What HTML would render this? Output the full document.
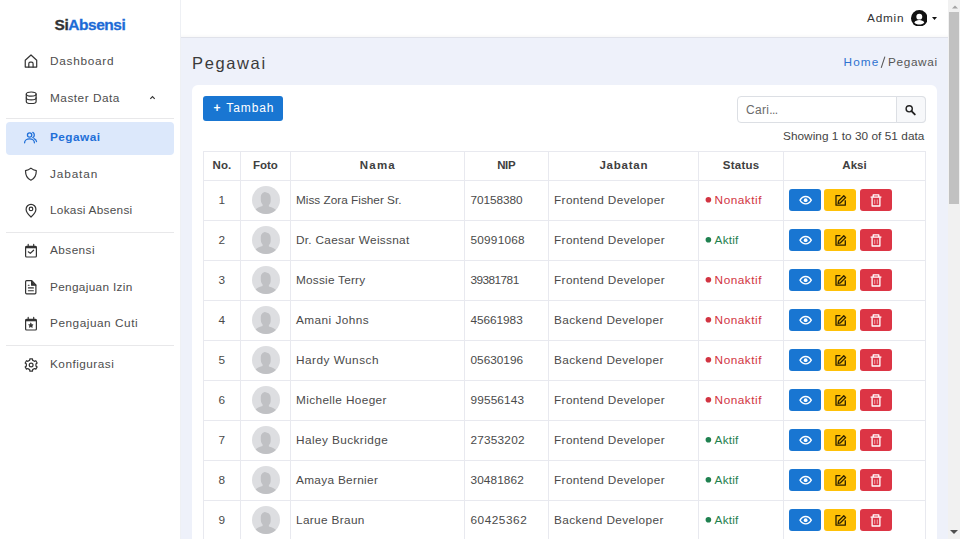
<!DOCTYPE html>
<html><head><meta charset="utf-8">
<style>
*{box-sizing:border-box;margin:0;padding:0}
html,body{width:960px;height:539px;overflow:hidden}
body{position:relative;background:#eef1fa;font-family:"Liberation Sans",sans-serif;color:#444}
.a{position:absolute;white-space:nowrap}
#sidebar{position:absolute;left:0;top:0;width:181px;height:539px;background:#fff;border-right:1px solid #eef0f4}
#topbar{position:absolute;left:181px;top:0;width:767px;height:38px;background:#fff;border-bottom:1px solid #e0e2ea;box-shadow:inset 0 -3px 3px -2px rgba(0,0,0,.035)}
.nav{position:absolute;left:50px;font-size:11.8px;color:#444;line-height:14px;white-space:nowrap}
.sep{position:absolute;left:6px;width:168px;height:1px;background:#e8e8ea}
#card{position:absolute;left:192px;top:85px;width:745px;height:470px;background:#fff;border-radius:6px}
.btn{position:absolute;border-radius:3px}
.th{position:absolute;font-weight:bold;font-size:11.5px;color:#404040;line-height:14px;white-space:nowrap}
.td{position:absolute;font-size:11.8px;color:#4a4a4a;line-height:14px;white-space:nowrap}
.hl{position:absolute;height:1px;background:#e8e9ef}
.vl{position:absolute;width:1px;background:#e8e9ef}
.av{position:absolute;left:252px;width:28px;height:28px;border-radius:50%;background:#dddee1;overflow:hidden}
.ab{position:absolute;width:32px;height:22px;border-radius:3px}
</style></head><body>
<div id="sidebar">
<div class="a" style="left:54.5px;top:17px;font-size:15.5px;font-weight:bold;line-height:16px;letter-spacing:-.45px;-webkit-text-stroke:.3px"><span style="color:#333">Si</span><span style="color:#1d6bd6">Absensi</span></div>
<svg class="a" style="left:20px;top:50px" width="22" height="22" viewBox="0 0 22 22" fill="none" stroke="#333" stroke-width="1.2" stroke-linejoin="round" stroke-linecap="round"><path d="M5.25 17.05V10.2L11 4.95l5.7 5.25v6.85z"/><path d="M8.8 17.05v-3.4a1.5 1.5 0 0 1 1.5-1.5h1.3a1.5 1.5 0 0 1 1.5 1.5v3.4"/></svg>
<div class="nav" style="top:54px;letter-spacing:0.725px;color:#4d4d4d;">Dashboard</div>
<svg class="a" style="left:20px;top:87px" width="22" height="22" viewBox="0 0 22 22" fill="none" stroke="#333" stroke-width="1.2" stroke-linejoin="round" stroke-linecap="round"><ellipse cx="11.2" cy="7.1" rx="4.9" ry="2.1"/><path d="M6.3 7.1v7.3c0 1.2 2.2 2.1 4.9 2.1s4.9-.9 4.9-2.1V7.1"/><path d="M6.3 10.8c0 1.2 2.2 2.1 4.9 2.1s4.9-.9 4.9-2.1"/></svg>
<div class="nav" style="top:90.5px;letter-spacing:0.51px;color:#4d4d4d;">Master Data</div>
<svg class="a" style="left:148.5px;top:95px" width="7" height="5" viewBox="0 0 7 5"><path d="M1.3 3.8 3.5 1.5 5.7 3.8" fill="none" stroke="#333" stroke-width="1.15"/></svg>
<div class="sep" style="top:118px"></div>
<div class="a" style="left:6px;top:121.5px;width:168px;height:33px;background:#dce8fb;border-radius:4px"></div>
<svg class="a" style="left:20px;top:127px" width="22" height="22" viewBox="0 0 22 22" fill="none" stroke="#1f6fd8" stroke-width="1.3" stroke-linejoin="round" stroke-linecap="round"><circle cx="9.6" cy="8" r="2.15"/><path d="M4.6 15.8c0-2.3 2.2-3.9 4.9-3.9s4.9 1.6 4.9 3.9"/><path d="M12.8 5.4c1 .4 1.5 1.5 1.5 2.6s-.5 2.2-1.5 2.6"/><path d="M14 11.6c1.5.6 2.4 1.6 2.5 2.9"/></svg>
<div class="nav" style="top:130px;letter-spacing:0.467px;color:#1f6fd8;font-weight:bold;">Pegawai</div>
<svg class="a" style="left:20px;top:163px" width="22" height="22" viewBox="0 0 22 22" fill="none" stroke="#333" stroke-width="1.2" stroke-linejoin="round" stroke-linecap="round"><path d="M10.9 5.1C9.3 6.4 7.6 7.2 5.5 7.7c0 5 2.3 8.2 5.4 9.5 3.1-1.3 5.4-4.5 5.4-9.5-2.1-.5-3.8-1.3-5.4-2.6z"/></svg>
<div class="nav" style="top:166.5px;letter-spacing:0.883px;color:#4d4d4d;">Jabatan</div>
<svg class="a" style="left:20px;top:199px" width="22" height="22" viewBox="0 0 22 22" fill="none" stroke="#333" stroke-width="1.2" stroke-linejoin="round" stroke-linecap="round"><path d="M11 18C8 15.3 6.1 12.7 6.1 10.2a4.9 4.9 0 0 1 9.8 0c0 2.5-1.9 5.1-4.9 7.8z"/><circle cx="11" cy="9.9" r="1.8"/></svg>
<div class="nav" style="top:203px;letter-spacing:0.269px;color:#4d4d4d;">Lokasi Absensi</div>
<div class="sep" style="top:231.5px"></div>
<svg class="a" style="left:20px;top:240px" width="22" height="22" viewBox="0 0 22 22" fill="none" stroke="#333" stroke-width="1.2" stroke-linejoin="round" stroke-linecap="round"><path d="M6.6 6.4h8.8a1 1 0 0 1 1 1V16a1 1 0 0 1-1 1H6.6a1 1 0 0 1-1-1V7.4a1 1 0 0 1 1-1z"/><path d="M5.6 7.3h10.8" stroke-width="2" stroke-linecap="butt"/><path d="M8.2 4.4v2M13.7 4.4v2"/><path d="M8.3 11.8l2 1.6 3.3-3.2"/></svg>
<div class="nav" style="top:243px;letter-spacing:0.433px;color:#4d4d4d;">Absensi</div>
<svg class="a" style="left:20px;top:277px" width="22" height="22" viewBox="0 0 22 22" fill="none" stroke="#333" stroke-width="1.2" stroke-linejoin="round" stroke-linecap="round"><path d="M6.6 3.7h5.2l4.1 4.3v7.8a1 1 0 0 1-1 1H6.6a1 1 0 0 1-1-1V4.7a1 1 0 0 1 1-1z"/><path d="M11.6 4v4.2h4.1" fill="#333"/><path d="M8.3 8.2h.8M8.4 10.9h5M8.4 13.7h5" stroke-width="1.1"/></svg>
<div class="nav" style="top:279.5px;letter-spacing:0.323px;color:#4d4d4d;">Pengajuan Izin</div>
<svg class="a" style="left:20px;top:313px" width="22" height="22" viewBox="0 0 22 22" fill="none" stroke="#333" stroke-width="1.2" stroke-linejoin="round" stroke-linecap="round"><path d="M6.6 6.4h8.8a1 1 0 0 1 1 1V16a1 1 0 0 1-1 1H6.6a1 1 0 0 1-1-1V7.4a1 1 0 0 1 1-1z"/><path d="M5.6 7.3h10.8" stroke-width="2" stroke-linecap="butt"/><path d="M8.2 4.4v2M13.7 4.4v2"/><path d="M10.85 10.1l.75 1.45 1.55.2-1.15 1.1.3 1.55-1.45-.75-1.45.75.3-1.55-1.15-1.1 1.55-.2z" fill="#333" stroke-width=".6"/></svg>
<div class="nav" style="top:316px;letter-spacing:0.531px;color:#4d4d4d;">Pengajuan Cuti</div>
<div class="sep" style="top:344.5px"></div>
<svg class="a" style="left:20px;top:354px" width="22" height="22" viewBox="0 0 22 22" fill="none" stroke="#333" stroke-width="1.2" stroke-linejoin="round" stroke-linecap="round"><path d="M8.73 6.75 L9.65 6.34 L9.84 4.79 L12.46 4.79 L12.65 6.34 L13.58 6.75 L14.40 7.35 L15.83 6.73 L17.14 9.00 L15.89 9.94 L16.00 10.95 L15.89 11.96 L17.14 12.90 L15.83 15.17 L14.40 14.55 L13.57 15.15 L12.65 15.56 L12.46 17.11 L9.84 17.11 L9.65 15.56 L8.72 15.15 L7.90 14.55 L6.47 15.17 L5.16 12.90 L6.41 11.96 L6.30 10.95 L6.41 9.94 L5.16 9.00 L6.47 6.73 L7.90 7.35z"/><circle cx="11.15" cy="10.95" r="1.9"/></svg>
<div class="nav" style="top:357px;letter-spacing:0.48px;color:#4d4d4d;">Konfigurasi</div>
</div>
<div id="topbar"></div>
<div class="a" style="left:867px;top:10.8px;font-size:11.8px;color:#333;letter-spacing:0.775px;line-height:14px">Admin</div>
<svg class="a" style="left:910.5px;top:9.7px" width="16.6" height="16.6" viewBox="0 0 24 24"><circle cx="12" cy="12" r="12" fill="#111"/><circle cx="12" cy="9.6" r="4.3" fill="#fff"/><path d="M4.8 18c1.4-2.1 4-3.4 7.2-3.4s5.8 1.3 7.2 3.4c-1.7 1.9-4.2 3-7.2 3s-5.5-1.1-7.2-3z" fill="#fff"/></svg>
<svg class="a" style="left:931.5px;top:16.8px" width="5" height="3" viewBox="0 0 5 3"><path d="M0 0h5L2.5 3z" fill="#111"/></svg>
<div class="a" style="left:843.5px;top:55px;font-size:11.8px;line-height:14px;color:#2f72d0;letter-spacing:1.133px">Home</div>
<svg class="a" style="left:878px;top:54px" width="10" height="16" viewBox="0 0 10 16"><path d="M6.9 2.6 3.2 13.9" stroke="#555" stroke-width="1.05"/></svg>
<div class="a" style="left:888px;top:55px;font-size:11.8px;line-height:14px;color:#555;letter-spacing:0.629px">Pegawai</div>
<div class="a" style="left:192px;top:53.7px;font-size:16.5px;color:#3a3a3a;letter-spacing:1.63px;line-height:18px">Pegawai</div>

<div id="card"></div>
<div class="btn" style="left:203px;top:96px;width:80px;height:24.6px;background:#1976d2"></div>
<div class="a" style="left:213.5px;top:101px;font-size:12px;color:#fff;letter-spacing:1px;line-height:14px"><b style="letter-spacing:1.8px">+</b><span style="letter-spacing:.9px"> Tambah</span></div>
<div class="a" style="left:736.5px;top:96px;width:189px;height:26.5px;border:1px solid #dcdfe4;border-radius:4px;background:#fff"></div>
<div class="a" style="left:896px;top:96px;width:29.5px;height:26.5px;border:1px solid #dcdfe4;border-radius:0 4px 4px 0;background:#f7f8fa"></div>
<div class="a" style="left:746px;top:102.5px;font-size:12px;color:#6b6b6b;letter-spacing:.3px;line-height:14px">Cari<span style="letter-spacing:-.6px">...</span></div>
<svg class="a" style="left:900px;top:100px" width="20" height="20" viewBox="0 0 20 20"><circle cx="9.2" cy="8.8" r="3.1" fill="none" stroke="#222" stroke-width="1.4"/><path d="M11.5 11.1l3.3 3.3" stroke="#222" stroke-width="1.9" stroke-linecap="round"/></svg>
<div class="a" style="left:783px;top:129px;font-size:11.8px;color:#444;letter-spacing:.04px;line-height:14px">Showing 1 to 30 of 51 data</div>

<div class="vl" style="left:202.8px;top:151px;height:400px"></div>
<div class="vl" style="left:239.9px;top:151px;height:400px"></div>
<div class="vl" style="left:289.8px;top:151px;height:400px"></div>
<div class="vl" style="left:463.8px;top:151px;height:400px"></div>
<div class="vl" style="left:548.0px;top:151px;height:400px"></div>
<div class="vl" style="left:697.9px;top:151px;height:400px"></div>
<div class="vl" style="left:783.0px;top:151px;height:400px"></div>
<div class="vl" style="left:925.0px;top:151px;height:400px"></div>
<div class="hl" style="left:203px;top:151px;width:723px"></div>
<div class="hl" style="left:203px;top:179.5px;width:723px"></div>
<div class="hl" style="left:203px;top:219.5px;width:723px"></div>
<div class="hl" style="left:203px;top:259.5px;width:723px"></div>
<div class="hl" style="left:203px;top:299.5px;width:723px"></div>
<div class="hl" style="left:203px;top:339.5px;width:723px"></div>
<div class="hl" style="left:203px;top:379.5px;width:723px"></div>
<div class="hl" style="left:203px;top:419.5px;width:723px"></div>
<div class="hl" style="left:203px;top:459.5px;width:723px"></div>
<div class="hl" style="left:203px;top:499.5px;width:723px"></div>
<div class="th" style="left:203.3px;width:37.099999999999994px;top:158px;text-align:center;letter-spacing:0px;text-indent:0px">No.</div>
<div class="th" style="left:240.4px;width:49.900000000000006px;top:158px;text-align:center;letter-spacing:0px;text-indent:0px">Foto</div>
<div class="th" style="left:290.3px;width:174.0px;top:158px;text-align:center;letter-spacing:1.2px;text-indent:1.2px">Nama</div>
<div class="th" style="left:464.3px;width:84.19999999999999px;top:158px;text-align:center;letter-spacing:-0.4px;text-indent:-0.4px">NIP</div>
<div class="th" style="left:548.5px;width:149.89999999999998px;top:158px;text-align:center;letter-spacing:0.75px;text-indent:0.75px">Jabatan</div>
<div class="th" style="left:698.4px;width:85.10000000000002px;top:158px;text-align:center;letter-spacing:0.25px;text-indent:0.25px">Status</div>
<div class="th" style="left:783.5px;width:142.0px;top:158px;text-align:center;letter-spacing:0px;text-indent:0px">Aksi</div>
<div class="td" style="left:203.3px;width:37px;top:192.5px;text-align:center">1</div>
<div class="av" style="top:186px"><svg width="28" height="28" viewBox="0 0 28 28" style="display:block"><path d="M13.6 6.6c3 0 5.1 2.1 5.1 5.3v2.8c0 1.8-.7 3.3-1.8 4.3v1.5c3.5.7 6.4 2.3 8 4.6V28H2.6v-3.5c1.6-2.3 4.5-3.9 8-4.6v-1.5c-1.1-1-1.8-2.5-1.8-4.3v-2.8c0-3.2 2.1-5.3 4.8-5.3z" fill="#c0c1c4"/></svg></div>
<div class="td" style="left:296px;top:192.5px;letter-spacing:0.0px">Miss Zora Fisher Sr.</div>
<div class="td" style="left:470.5px;top:192.5px;letter-spacing:-0.071px">70158380</div>
<div class="td" style="left:554px;top:192.5px;letter-spacing:0.371px">Frontend Developer</div>
<svg class="a" style="left:703px;top:195px" width="10" height="10" viewBox="0 0 10 10"><circle cx="5.4" cy="4.8" r="2.8" fill="#d23442"/></svg>
<div class="td" style="left:714.6px;top:192.5px;color:#d23442;letter-spacing:0.514px">Nonaktif</div>
<div class="ab" style="left:789px;top:188.8px;background:#1976d2"><svg class="a" style="left:0;top:0" width="32" height="22" viewBox="0 0 32 22" fill="none" stroke="#fff" stroke-width="1.35"><path d="M11 11.2C12.5 8.6 14.4 7.5 16.65 7.5s4.15 1.1 5.65 3.7c-1.5 2.6-3.4 3.7-5.65 3.7S12.5 13.8 11 11.2z"/><circle cx="16.65" cy="11.2" r="1.9" fill="#fff" stroke="none"/></svg></div>
<div class="ab" style="left:824.4px;top:188.8px;background:#ffc107"><svg class="a" style="left:0;top:0" width="32" height="22" viewBox="0 0 32 22" fill="none" stroke="#2b2000" stroke-width="1.3" stroke-linejoin="round"><path d="M16.4 6.6H12v9.6h9.3V11.2"/><path d="M14.1 14.3l.5-2.3 5.2-5.2 1.8 1.8-5.2 5.2z"/></svg></div>
<div class="ab" style="left:860px;top:188.8px;background:#dc3545"><svg class="a" style="left:0;top:0" width="32" height="22" viewBox="0 0 32 22" fill="none" stroke="#fff" stroke-width="1.3" stroke-linejoin="round"><path d="M10.6 8.1h10.8"/><path d="M13.2 8V5.9h5.6V8"/><path d="M12.1 8.4v8.6h7.8V8.4"/><path d="M14.7 10.5v4.4M17.3 10.5v4.4" stroke-width=".8" stroke="#f3c2c7"/></svg></div>
<div class="td" style="left:203.3px;width:37px;top:232.5px;text-align:center">2</div>
<div class="av" style="top:226px"><svg width="28" height="28" viewBox="0 0 28 28" style="display:block"><path d="M13.6 6.6c3 0 5.1 2.1 5.1 5.3v2.8c0 1.8-.7 3.3-1.8 4.3v1.5c3.5.7 6.4 2.3 8 4.6V28H2.6v-3.5c1.6-2.3 4.5-3.9 8-4.6v-1.5c-1.1-1-1.8-2.5-1.8-4.3v-2.8c0-3.2 2.1-5.3 4.8-5.3z" fill="#c0c1c4"/></svg></div>
<div class="td" style="left:296px;top:232.5px;letter-spacing:0.289px">Dr. Caesar Weissnat</div>
<div class="td" style="left:470.5px;top:232.5px;letter-spacing:0.229px">50991068</div>
<div class="td" style="left:554px;top:232.5px;letter-spacing:0.371px">Frontend Developer</div>
<svg class="a" style="left:703px;top:235px" width="10" height="10" viewBox="0 0 10 10"><circle cx="5.4" cy="4.8" r="2.8" fill="#1f8150"/></svg>
<div class="td" style="left:714.6px;top:232.5px;color:#1f8150;letter-spacing:0.2px">Aktif</div>
<div class="ab" style="left:789px;top:228.8px;background:#1976d2"><svg class="a" style="left:0;top:0" width="32" height="22" viewBox="0 0 32 22" fill="none" stroke="#fff" stroke-width="1.35"><path d="M11 11.2C12.5 8.6 14.4 7.5 16.65 7.5s4.15 1.1 5.65 3.7c-1.5 2.6-3.4 3.7-5.65 3.7S12.5 13.8 11 11.2z"/><circle cx="16.65" cy="11.2" r="1.9" fill="#fff" stroke="none"/></svg></div>
<div class="ab" style="left:824.4px;top:228.8px;background:#ffc107"><svg class="a" style="left:0;top:0" width="32" height="22" viewBox="0 0 32 22" fill="none" stroke="#2b2000" stroke-width="1.3" stroke-linejoin="round"><path d="M16.4 6.6H12v9.6h9.3V11.2"/><path d="M14.1 14.3l.5-2.3 5.2-5.2 1.8 1.8-5.2 5.2z"/></svg></div>
<div class="ab" style="left:860px;top:228.8px;background:#dc3545"><svg class="a" style="left:0;top:0" width="32" height="22" viewBox="0 0 32 22" fill="none" stroke="#fff" stroke-width="1.3" stroke-linejoin="round"><path d="M10.6 8.1h10.8"/><path d="M13.2 8V5.9h5.6V8"/><path d="M12.1 8.4v8.6h7.8V8.4"/><path d="M14.7 10.5v4.4M17.3 10.5v4.4" stroke-width=".8" stroke="#f3c2c7"/></svg></div>
<div class="td" style="left:203.3px;width:37px;top:272.5px;text-align:center">3</div>
<div class="av" style="top:266px"><svg width="28" height="28" viewBox="0 0 28 28" style="display:block"><path d="M13.6 6.6c3 0 5.1 2.1 5.1 5.3v2.8c0 1.8-.7 3.3-1.8 4.3v1.5c3.5.7 6.4 2.3 8 4.6V28H2.6v-3.5c1.6-2.3 4.5-3.9 8-4.6v-1.5c-1.1-1-1.8-2.5-1.8-4.3v-2.8c0-3.2 2.1-5.3 4.8-5.3z" fill="#c0c1c4"/></svg></div>
<div class="td" style="left:296px;top:272.5px;letter-spacing:0.227px">Mossie Terry</div>
<div class="td" style="left:470.5px;top:272.5px;letter-spacing:-0.543px">39381781</div>
<div class="td" style="left:554px;top:272.5px;letter-spacing:0.371px">Frontend Developer</div>
<svg class="a" style="left:703px;top:275px" width="10" height="10" viewBox="0 0 10 10"><circle cx="5.4" cy="4.8" r="2.8" fill="#d23442"/></svg>
<div class="td" style="left:714.6px;top:272.5px;color:#d23442;letter-spacing:0.514px">Nonaktif</div>
<div class="ab" style="left:789px;top:268.8px;background:#1976d2"><svg class="a" style="left:0;top:0" width="32" height="22" viewBox="0 0 32 22" fill="none" stroke="#fff" stroke-width="1.35"><path d="M11 11.2C12.5 8.6 14.4 7.5 16.65 7.5s4.15 1.1 5.65 3.7c-1.5 2.6-3.4 3.7-5.65 3.7S12.5 13.8 11 11.2z"/><circle cx="16.65" cy="11.2" r="1.9" fill="#fff" stroke="none"/></svg></div>
<div class="ab" style="left:824.4px;top:268.8px;background:#ffc107"><svg class="a" style="left:0;top:0" width="32" height="22" viewBox="0 0 32 22" fill="none" stroke="#2b2000" stroke-width="1.3" stroke-linejoin="round"><path d="M16.4 6.6H12v9.6h9.3V11.2"/><path d="M14.1 14.3l.5-2.3 5.2-5.2 1.8 1.8-5.2 5.2z"/></svg></div>
<div class="ab" style="left:860px;top:268.8px;background:#dc3545"><svg class="a" style="left:0;top:0" width="32" height="22" viewBox="0 0 32 22" fill="none" stroke="#fff" stroke-width="1.3" stroke-linejoin="round"><path d="M10.6 8.1h10.8"/><path d="M13.2 8V5.9h5.6V8"/><path d="M12.1 8.4v8.6h7.8V8.4"/><path d="M14.7 10.5v4.4M17.3 10.5v4.4" stroke-width=".8" stroke="#f3c2c7"/></svg></div>
<div class="td" style="left:203.3px;width:37px;top:312.5px;text-align:center">4</div>
<div class="av" style="top:306px"><svg width="28" height="28" viewBox="0 0 28 28" style="display:block"><path d="M13.6 6.6c3 0 5.1 2.1 5.1 5.3v2.8c0 1.8-.7 3.3-1.8 4.3v1.5c3.5.7 6.4 2.3 8 4.6V28H2.6v-3.5c1.6-2.3 4.5-3.9 8-4.6v-1.5c-1.1-1-1.8-2.5-1.8-4.3v-2.8c0-3.2 2.1-5.3 4.8-5.3z" fill="#c0c1c4"/></svg></div>
<div class="td" style="left:296px;top:312.5px;letter-spacing:0.45px">Amani Johns</div>
<div class="td" style="left:470.5px;top:312.5px;letter-spacing:-0.043px">45661983</div>
<div class="td" style="left:554px;top:312.5px;letter-spacing:0.4px">Backend Developer</div>
<svg class="a" style="left:703px;top:315px" width="10" height="10" viewBox="0 0 10 10"><circle cx="5.4" cy="4.8" r="2.8" fill="#d23442"/></svg>
<div class="td" style="left:714.6px;top:312.5px;color:#d23442;letter-spacing:0.514px">Nonaktif</div>
<div class="ab" style="left:789px;top:308.8px;background:#1976d2"><svg class="a" style="left:0;top:0" width="32" height="22" viewBox="0 0 32 22" fill="none" stroke="#fff" stroke-width="1.35"><path d="M11 11.2C12.5 8.6 14.4 7.5 16.65 7.5s4.15 1.1 5.65 3.7c-1.5 2.6-3.4 3.7-5.65 3.7S12.5 13.8 11 11.2z"/><circle cx="16.65" cy="11.2" r="1.9" fill="#fff" stroke="none"/></svg></div>
<div class="ab" style="left:824.4px;top:308.8px;background:#ffc107"><svg class="a" style="left:0;top:0" width="32" height="22" viewBox="0 0 32 22" fill="none" stroke="#2b2000" stroke-width="1.3" stroke-linejoin="round"><path d="M16.4 6.6H12v9.6h9.3V11.2"/><path d="M14.1 14.3l.5-2.3 5.2-5.2 1.8 1.8-5.2 5.2z"/></svg></div>
<div class="ab" style="left:860px;top:308.8px;background:#dc3545"><svg class="a" style="left:0;top:0" width="32" height="22" viewBox="0 0 32 22" fill="none" stroke="#fff" stroke-width="1.3" stroke-linejoin="round"><path d="M10.6 8.1h10.8"/><path d="M13.2 8V5.9h5.6V8"/><path d="M12.1 8.4v8.6h7.8V8.4"/><path d="M14.7 10.5v4.4M17.3 10.5v4.4" stroke-width=".8" stroke="#f3c2c7"/></svg></div>
<div class="td" style="left:203.3px;width:37px;top:352.5px;text-align:center">5</div>
<div class="av" style="top:346px"><svg width="28" height="28" viewBox="0 0 28 28" style="display:block"><path d="M13.6 6.6c3 0 5.1 2.1 5.1 5.3v2.8c0 1.8-.7 3.3-1.8 4.3v1.5c3.5.7 6.4 2.3 8 4.6V28H2.6v-3.5c1.6-2.3 4.5-3.9 8-4.6v-1.5c-1.1-1-1.8-2.5-1.8-4.3v-2.8c0-3.2 2.1-5.3 4.8-5.3z" fill="#c0c1c4"/></svg></div>
<div class="td" style="left:296px;top:352.5px;letter-spacing:0.482px">Hardy Wunsch</div>
<div class="td" style="left:470.5px;top:352.5px;letter-spacing:0.014px">05630196</div>
<div class="td" style="left:554px;top:352.5px;letter-spacing:0.4px">Backend Developer</div>
<svg class="a" style="left:703px;top:355px" width="10" height="10" viewBox="0 0 10 10"><circle cx="5.4" cy="4.8" r="2.8" fill="#d23442"/></svg>
<div class="td" style="left:714.6px;top:352.5px;color:#d23442;letter-spacing:0.514px">Nonaktif</div>
<div class="ab" style="left:789px;top:348.8px;background:#1976d2"><svg class="a" style="left:0;top:0" width="32" height="22" viewBox="0 0 32 22" fill="none" stroke="#fff" stroke-width="1.35"><path d="M11 11.2C12.5 8.6 14.4 7.5 16.65 7.5s4.15 1.1 5.65 3.7c-1.5 2.6-3.4 3.7-5.65 3.7S12.5 13.8 11 11.2z"/><circle cx="16.65" cy="11.2" r="1.9" fill="#fff" stroke="none"/></svg></div>
<div class="ab" style="left:824.4px;top:348.8px;background:#ffc107"><svg class="a" style="left:0;top:0" width="32" height="22" viewBox="0 0 32 22" fill="none" stroke="#2b2000" stroke-width="1.3" stroke-linejoin="round"><path d="M16.4 6.6H12v9.6h9.3V11.2"/><path d="M14.1 14.3l.5-2.3 5.2-5.2 1.8 1.8-5.2 5.2z"/></svg></div>
<div class="ab" style="left:860px;top:348.8px;background:#dc3545"><svg class="a" style="left:0;top:0" width="32" height="22" viewBox="0 0 32 22" fill="none" stroke="#fff" stroke-width="1.3" stroke-linejoin="round"><path d="M10.6 8.1h10.8"/><path d="M13.2 8V5.9h5.6V8"/><path d="M12.1 8.4v8.6h7.8V8.4"/><path d="M14.7 10.5v4.4M17.3 10.5v4.4" stroke-width=".8" stroke="#f3c2c7"/></svg></div>
<div class="td" style="left:203.3px;width:37px;top:392.5px;text-align:center">6</div>
<div class="av" style="top:386px"><svg width="28" height="28" viewBox="0 0 28 28" style="display:block"><path d="M13.6 6.6c3 0 5.1 2.1 5.1 5.3v2.8c0 1.8-.7 3.3-1.8 4.3v1.5c3.5.7 6.4 2.3 8 4.6V28H2.6v-3.5c1.6-2.3 4.5-3.9 8-4.6v-1.5c-1.1-1-1.8-2.5-1.8-4.3v-2.8c0-3.2 2.1-5.3 4.8-5.3z" fill="#c0c1c4"/></svg></div>
<div class="td" style="left:296px;top:392.5px;letter-spacing:0.371px">Michelle Hoeger</div>
<div class="td" style="left:470.5px;top:392.5px;letter-spacing:0.157px">99556143</div>
<div class="td" style="left:554px;top:392.5px;letter-spacing:0.371px">Frontend Developer</div>
<svg class="a" style="left:703px;top:395px" width="10" height="10" viewBox="0 0 10 10"><circle cx="5.4" cy="4.8" r="2.8" fill="#d23442"/></svg>
<div class="td" style="left:714.6px;top:392.5px;color:#d23442;letter-spacing:0.514px">Nonaktif</div>
<div class="ab" style="left:789px;top:388.8px;background:#1976d2"><svg class="a" style="left:0;top:0" width="32" height="22" viewBox="0 0 32 22" fill="none" stroke="#fff" stroke-width="1.35"><path d="M11 11.2C12.5 8.6 14.4 7.5 16.65 7.5s4.15 1.1 5.65 3.7c-1.5 2.6-3.4 3.7-5.65 3.7S12.5 13.8 11 11.2z"/><circle cx="16.65" cy="11.2" r="1.9" fill="#fff" stroke="none"/></svg></div>
<div class="ab" style="left:824.4px;top:388.8px;background:#ffc107"><svg class="a" style="left:0;top:0" width="32" height="22" viewBox="0 0 32 22" fill="none" stroke="#2b2000" stroke-width="1.3" stroke-linejoin="round"><path d="M16.4 6.6H12v9.6h9.3V11.2"/><path d="M14.1 14.3l.5-2.3 5.2-5.2 1.8 1.8-5.2 5.2z"/></svg></div>
<div class="ab" style="left:860px;top:388.8px;background:#dc3545"><svg class="a" style="left:0;top:0" width="32" height="22" viewBox="0 0 32 22" fill="none" stroke="#fff" stroke-width="1.3" stroke-linejoin="round"><path d="M10.6 8.1h10.8"/><path d="M13.2 8V5.9h5.6V8"/><path d="M12.1 8.4v8.6h7.8V8.4"/><path d="M14.7 10.5v4.4M17.3 10.5v4.4" stroke-width=".8" stroke="#f3c2c7"/></svg></div>
<div class="td" style="left:203.3px;width:37px;top:432.5px;text-align:center">7</div>
<div class="av" style="top:426px"><svg width="28" height="28" viewBox="0 0 28 28" style="display:block"><path d="M13.6 6.6c3 0 5.1 2.1 5.1 5.3v2.8c0 1.8-.7 3.3-1.8 4.3v1.5c3.5.7 6.4 2.3 8 4.6V28H2.6v-3.5c1.6-2.3 4.5-3.9 8-4.6v-1.5c-1.1-1-1.8-2.5-1.8-4.3v-2.8c0-3.2 2.1-5.3 4.8-5.3z" fill="#c0c1c4"/></svg></div>
<div class="td" style="left:296px;top:432.5px;letter-spacing:0.414px">Haley Buckridge</div>
<div class="td" style="left:470.5px;top:432.5px;letter-spacing:0.214px">27353202</div>
<div class="td" style="left:554px;top:432.5px;letter-spacing:0.371px">Frontend Developer</div>
<svg class="a" style="left:703px;top:435px" width="10" height="10" viewBox="0 0 10 10"><circle cx="5.4" cy="4.8" r="2.8" fill="#1f8150"/></svg>
<div class="td" style="left:714.6px;top:432.5px;color:#1f8150;letter-spacing:0.2px">Aktif</div>
<div class="ab" style="left:789px;top:428.8px;background:#1976d2"><svg class="a" style="left:0;top:0" width="32" height="22" viewBox="0 0 32 22" fill="none" stroke="#fff" stroke-width="1.35"><path d="M11 11.2C12.5 8.6 14.4 7.5 16.65 7.5s4.15 1.1 5.65 3.7c-1.5 2.6-3.4 3.7-5.65 3.7S12.5 13.8 11 11.2z"/><circle cx="16.65" cy="11.2" r="1.9" fill="#fff" stroke="none"/></svg></div>
<div class="ab" style="left:824.4px;top:428.8px;background:#ffc107"><svg class="a" style="left:0;top:0" width="32" height="22" viewBox="0 0 32 22" fill="none" stroke="#2b2000" stroke-width="1.3" stroke-linejoin="round"><path d="M16.4 6.6H12v9.6h9.3V11.2"/><path d="M14.1 14.3l.5-2.3 5.2-5.2 1.8 1.8-5.2 5.2z"/></svg></div>
<div class="ab" style="left:860px;top:428.8px;background:#dc3545"><svg class="a" style="left:0;top:0" width="32" height="22" viewBox="0 0 32 22" fill="none" stroke="#fff" stroke-width="1.3" stroke-linejoin="round"><path d="M10.6 8.1h10.8"/><path d="M13.2 8V5.9h5.6V8"/><path d="M12.1 8.4v8.6h7.8V8.4"/><path d="M14.7 10.5v4.4M17.3 10.5v4.4" stroke-width=".8" stroke="#f3c2c7"/></svg></div>
<div class="td" style="left:203.3px;width:37px;top:472.5px;text-align:center">8</div>
<div class="av" style="top:466px"><svg width="28" height="28" viewBox="0 0 28 28" style="display:block"><path d="M13.6 6.6c3 0 5.1 2.1 5.1 5.3v2.8c0 1.8-.7 3.3-1.8 4.3v1.5c3.5.7 6.4 2.3 8 4.6V28H2.6v-3.5c1.6-2.3 4.5-3.9 8-4.6v-1.5c-1.1-1-1.8-2.5-1.8-4.3v-2.8c0-3.2 2.1-5.3 4.8-5.3z" fill="#c0c1c4"/></svg></div>
<div class="td" style="left:296px;top:472.5px;letter-spacing:0.317px">Amaya Bernier</div>
<div class="td" style="left:470.5px;top:472.5px;letter-spacing:0.114px">30481862</div>
<div class="td" style="left:554px;top:472.5px;letter-spacing:0.371px">Frontend Developer</div>
<svg class="a" style="left:703px;top:475px" width="10" height="10" viewBox="0 0 10 10"><circle cx="5.4" cy="4.8" r="2.8" fill="#1f8150"/></svg>
<div class="td" style="left:714.6px;top:472.5px;color:#1f8150;letter-spacing:0.2px">Aktif</div>
<div class="ab" style="left:789px;top:468.8px;background:#1976d2"><svg class="a" style="left:0;top:0" width="32" height="22" viewBox="0 0 32 22" fill="none" stroke="#fff" stroke-width="1.35"><path d="M11 11.2C12.5 8.6 14.4 7.5 16.65 7.5s4.15 1.1 5.65 3.7c-1.5 2.6-3.4 3.7-5.65 3.7S12.5 13.8 11 11.2z"/><circle cx="16.65" cy="11.2" r="1.9" fill="#fff" stroke="none"/></svg></div>
<div class="ab" style="left:824.4px;top:468.8px;background:#ffc107"><svg class="a" style="left:0;top:0" width="32" height="22" viewBox="0 0 32 22" fill="none" stroke="#2b2000" stroke-width="1.3" stroke-linejoin="round"><path d="M16.4 6.6H12v9.6h9.3V11.2"/><path d="M14.1 14.3l.5-2.3 5.2-5.2 1.8 1.8-5.2 5.2z"/></svg></div>
<div class="ab" style="left:860px;top:468.8px;background:#dc3545"><svg class="a" style="left:0;top:0" width="32" height="22" viewBox="0 0 32 22" fill="none" stroke="#fff" stroke-width="1.3" stroke-linejoin="round"><path d="M10.6 8.1h10.8"/><path d="M13.2 8V5.9h5.6V8"/><path d="M12.1 8.4v8.6h7.8V8.4"/><path d="M14.7 10.5v4.4M17.3 10.5v4.4" stroke-width=".8" stroke="#f3c2c7"/></svg></div>
<div class="td" style="left:203.3px;width:37px;top:512.5px;text-align:center">9</div>
<div class="av" style="top:506px"><svg width="28" height="28" viewBox="0 0 28 28" style="display:block"><path d="M13.6 6.6c3 0 5.1 2.1 5.1 5.3v2.8c0 1.8-.7 3.3-1.8 4.3v1.5c3.5.7 6.4 2.3 8 4.6V28H2.6v-3.5c1.6-2.3 4.5-3.9 8-4.6v-1.5c-1.1-1-1.8-2.5-1.8-4.3v-2.8c0-3.2 2.1-5.3 4.8-5.3z" fill="#c0c1c4"/></svg></div>
<div class="td" style="left:296px;top:512.5px;letter-spacing:0.35px">Larue Braun</div>
<div class="td" style="left:470.5px;top:512.5px;letter-spacing:0.529px">60425362</div>
<div class="td" style="left:554px;top:512.5px;letter-spacing:0.4px">Backend Developer</div>
<svg class="a" style="left:703px;top:515px" width="10" height="10" viewBox="0 0 10 10"><circle cx="5.4" cy="4.8" r="2.8" fill="#1f8150"/></svg>
<div class="td" style="left:714.6px;top:512.5px;color:#1f8150;letter-spacing:0.2px">Aktif</div>
<div class="ab" style="left:789px;top:508.8px;background:#1976d2"><svg class="a" style="left:0;top:0" width="32" height="22" viewBox="0 0 32 22" fill="none" stroke="#fff" stroke-width="1.35"><path d="M11 11.2C12.5 8.6 14.4 7.5 16.65 7.5s4.15 1.1 5.65 3.7c-1.5 2.6-3.4 3.7-5.65 3.7S12.5 13.8 11 11.2z"/><circle cx="16.65" cy="11.2" r="1.9" fill="#fff" stroke="none"/></svg></div>
<div class="ab" style="left:824.4px;top:508.8px;background:#ffc107"><svg class="a" style="left:0;top:0" width="32" height="22" viewBox="0 0 32 22" fill="none" stroke="#2b2000" stroke-width="1.3" stroke-linejoin="round"><path d="M16.4 6.6H12v9.6h9.3V11.2"/><path d="M14.1 14.3l.5-2.3 5.2-5.2 1.8 1.8-5.2 5.2z"/></svg></div>
<div class="ab" style="left:860px;top:508.8px;background:#dc3545"><svg class="a" style="left:0;top:0" width="32" height="22" viewBox="0 0 32 22" fill="none" stroke="#fff" stroke-width="1.3" stroke-linejoin="round"><path d="M10.6 8.1h10.8"/><path d="M13.2 8V5.9h5.6V8"/><path d="M12.1 8.4v8.6h7.8V8.4"/><path d="M14.7 10.5v4.4M17.3 10.5v4.4" stroke-width=".8" stroke="#f3c2c7"/></svg></div>
<div class="a" style="left:948px;top:0;width:12px;height:539px;background:#f1f1f1"></div>
<div class="a" style="left:949px;top:12px;width:9.5px;height:192px;background:#c1c1c1"></div>
<svg class="a" style="left:951.5px;top:4.5px" width="6" height="4" viewBox="0 0 6 4"><path d="M0 3.5 3 .5 6 3.5z" fill="#a3a3a3"/></svg>
<svg class="a" style="left:950px;top:530px" width="8" height="5" viewBox="0 0 8 5"><path d="M0 0h8L4 4z" fill="#505050"/></svg>
</body></html>
